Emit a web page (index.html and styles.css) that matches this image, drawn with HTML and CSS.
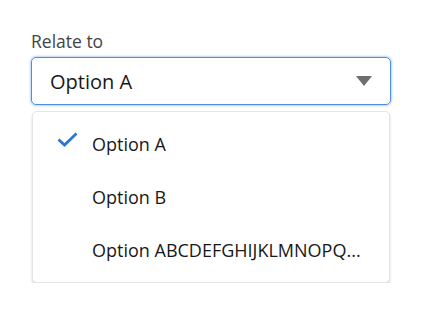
FILE: index.html
```html
<!DOCTYPE html>
<html lang="en">
<head>
<meta charset="utf-8">
<link rel="stylesheet" href="styles.css">
</head>
<body>
<div class="form">
  <label class="label">Relate to</label>
  <div class="combo">
    <span class="combo-value">Option A</span>
    <svg class="caret" width="16" height="10" viewBox="0 0 16 10"><path d="M0 0 H16 L8 10 Z" fill="#706e6b"/></svg>
  </div>
  <ul class="listbox">
    <li class="option selected">
      <span class="check"><svg width="21" height="15" viewBox="0 0 21 15"><path d="M1.5 7.5 L7.5 13 L19.5 1.5" fill="none" stroke="#2e74d6" stroke-width="2.8" stroke-linejoin="miter"/></svg></span>
      <span class="opt-text">Option A</span>
    </li>
    <li class="option">
      <span class="check"></span>
      <span class="opt-text">Option B</span>
    </li>
    <li class="option">
      <span class="check"></span>
      <span class="opt-text">Option ABCDEFGHIJKLMNOPQ...</span>
    </li>
  </ul>
</div>
</body>
</html>
```

FILE: styles.css
```css
html, body {
  margin: 0;
  padding: 0;
  background: #ffffff;
}
body {
  font-family: "Open Sans", Lato, sans-serif;
  color: #181818;
}
.form {
  width: 360px;
  padding: 30px 0 0 31px;
  display: flex;
  flex-direction: column;
}
.label {
  font-size: 17.5px;
  line-height: 22px;
  color: #444444;
  height: 22px;
  margin-bottom: 5px;
}
.combo {
  box-sizing: border-box;
  height: 48px;
  border: 1px solid #4c8ee6;
  border-radius: 5px;
  box-shadow: 0 0 2px 1px rgba(60, 130, 230, 0.35);
  display: flex;
  align-items: center;
  padding: 0 18px 0 18px;
}
.combo-value {
  flex: 1;
  font-size: 20px;
  color: #181818;
}
.caret {
  display: block;
}
.listbox {
  list-style: none;
  margin: 6px 1px 0 1px;
  padding: 5px 0 6px;
  border: 1px solid #e5e5e5;
  border-radius: 5px;
  box-shadow: 0 2px 3px rgba(0, 0, 0, 0.16);
  background: #fff;
}
.option {
  height: 53px;
  display: flex;
  align-items: center;
  padding: 0 20px 0 24px;
  font-size: 18px;
}
.check {
  width: 35px;
  flex: none;
  display: flex;
  align-items: center;
  margin-top: -8px;
}
.check svg { display: block; }
.opt-text {
  white-space: nowrap;
  color: #181818;
}
```
